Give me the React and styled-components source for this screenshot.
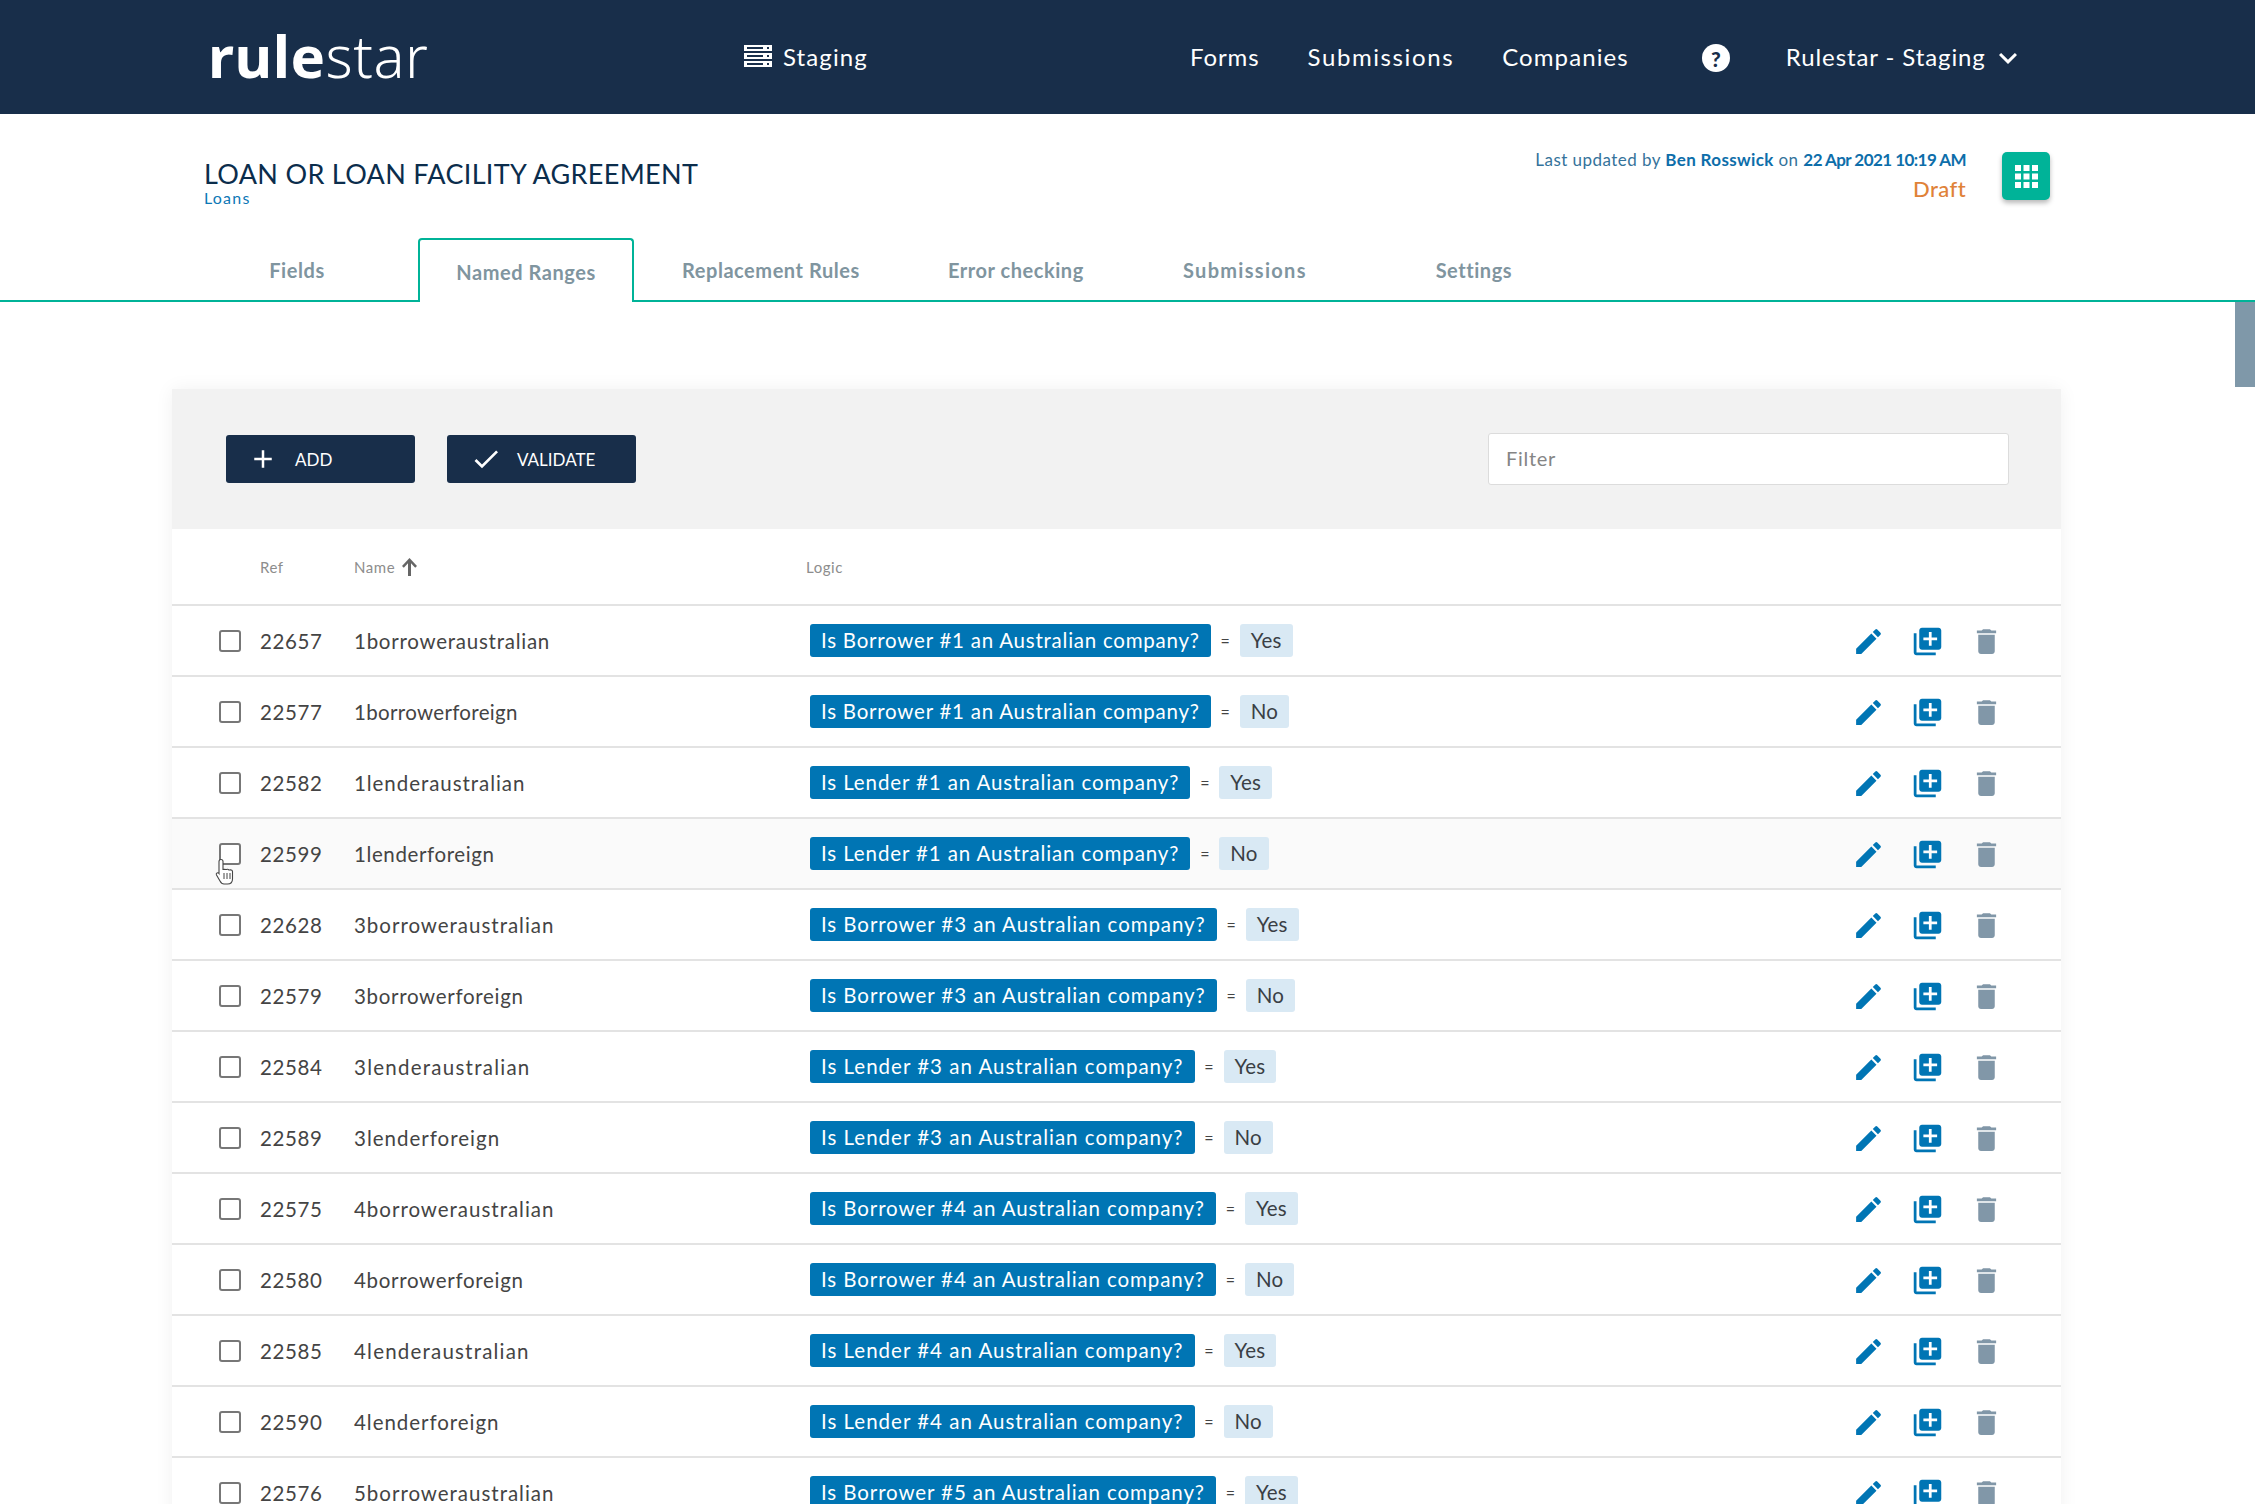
import React from "react";
import styled, { createGlobalStyle } from "styled-components";
import { MdEdit, MdLibraryAdd, MdDelete, MdAdd, MdCheck, MdKeyboardArrowDown } from "react-icons/md";

const Global = createGlobalStyle`
  html, body { margin: 0; padding: 0; height: 1504px; overflow: hidden; background: #fff; }
  body { font-family: "Lato", "Noto Sans", sans-serif; }
  * { box-sizing: border-box; }
`;

const Page = styled.div`position: relative; width: 2255px; height: 1504px; overflow: hidden;`;
const Header = styled.header`
  height: 114px; background: #182e4a; color: #fff; display: flex; align-items: center; padding-left: 208px;
`;
const Logo = styled.div`
  width: 222px; font-size: 58px; line-height: 1; letter-spacing: .5px; margin-top: -3px; white-space: nowrap;
  font-family: "Noto Sans", sans-serif;
  b { font-weight: 700; } span { font-weight: 300; }
`;
const Env = styled.div`
  display: flex; align-items: center; gap: 11px; margin-left: 314px; width: 446px; font-size: 24px; letter-spacing: 1.1px; margin-top: -2px;
`;
const NavGroup = styled.nav`display: flex; align-items: center; gap: 48px; margin-top: -2px;`;
const NavLink = styled.a`font-size: 24px; letter-spacing: ${p => p.$ls}px; color: #fff;`;
const Help = styled.span`
  margin-left: 73px; width: 28px; height: 28px; border-radius: 50%; background: #fff; color: #182e4a;
  display: flex; align-items: center; justify-content: center; font-weight: 900; font-size: 21px; margin-top: 2px;
`;
const Account = styled.div`display: flex; align-items: center; gap: 4px; margin-left: 56px; font-size: 24px; letter-spacing: .9px; margin-top: -2px;`;
const Chevron = styled(MdKeyboardArrowDown)`margin-top: 3px;`;

const TitleBar = styled.div`
  height: 124px; display: flex; padding-left: 204px; padding-right: 205px; align-items: flex-start; justify-content: space-between;
`;
const TitleBlock = styled.div`padding-top: 44px;`;
const Title = styled.h1`margin: 0; font-weight: 400; font-size: 27px; line-height: 32px; letter-spacing: .32px; color: #0b2d4c;`;
const Sub = styled.div`font-size: 16px; line-height: 18px; color: #0d78b6; margin-top: -1px; letter-spacing: 1.2px;`;
const MetaWrap = styled.div`display: flex; gap: 36px; padding-top: 38px;`;
const Meta = styled.div`text-align: right; margin-top: -3px;`;
const Updated = styled.div`font-size: 17px; line-height: 22px; color: #35739b; letter-spacing: .45px;`;
const UpdatedStrong = styled.b`font-weight: 700; color: #0d6eaa; letter-spacing: ${p => p.$ls}px;`;
const Status = styled.div`font-size: 22px; line-height: 26px; margin-top: 5px; color: #e08238; letter-spacing: .4px; font-weight: 500;`;
const GridBtn = styled.button`
  width: 48px; height: 48px; border: 0; border-radius: 5px; background: #00b398; margin-top: 0; padding: 0;
  box-shadow: 0 3px 5px rgba(0,0,0,.28); display: flex; align-items: center; justify-content: center;
`;

const Tabs = styled.div`
  height: 64px; display: flex; gap: 13px; padding-left: 189px; border-bottom: 2px solid #00b398;
`;
const Tab = styled.div`
  min-width: 216px; padding: ${p => (p.$active ? "1px" : "2px")} 35px 0; height: 64px; display: flex; align-items: center; justify-content: center;
  font-size: 20px; font-weight: 700; color: #80959f; letter-spacing: ${p => p.$ls ?? 0.55}px; border-radius: 4px 4px 0 0;
  padding-bottom: ${p => (p.$active ? "0" : "3px")};
  ${p => p.$active && "background:#fff; border:2px solid #00b398; border-bottom:0; color:#80959f;"}
`;

const Card = styled.section`
  margin: 87px 0 0 172px; width: 1889px; background: #fff; box-shadow: 0 0 18px rgba(0,0,0,.06);
`;
const Toolbar = styled.div`
  height: 140px; background: #f2f2f2; display: flex; align-items: center; padding: 0 52px 0 54px; gap: 32px;
`;
const ActionBtn = styled.button`
  width: 189px; height: 48px; border: 0; border-radius: 3px; background: #182e4a; color: #fff; display: flex; align-items: center;
  gap: ${p => p.$gap}px; padding-left: ${p => p.$pad}px; font-family: inherit; font-size: 17px; letter-spacing: 0;
`;
const Filter = styled.div`
  margin-left: auto; width: 521px; height: 52px; background: #fff; border: 1px solid #dcdcdc; border-radius: 3px;
  display: flex; align-items: center; padding: 0 0 2px 17px; color: #858585; font-size: 20px; letter-spacing: .7px;
`;
const Row = styled.div`
  display: grid; grid-template-columns: 88px 94px 452px 1fr auto; align-items: center; height: 71px; border-top: 2px solid #e3e3e3;
  background: ${p => (p.$hover ? "#fafafa" : "#fff")};
`;
const HeadRow = styled(Row)`
  height: 75px; border-top: 0; font-size: 15px; color: #8d8d8d; letter-spacing: .55px;
`;
const NameHead = styled.span`display: flex; align-items: center; gap: 7px;`;
const Check = styled.span`
  display: block; width: 22px; height: 22px; margin-left: 47px; border: 2px solid #777; border-radius: 3px; background: #fff;
`;
const Cell = styled.span`font-size: 20.5px; color: #444; letter-spacing: ${p => p.$ls ?? 0.6}px;`;
const Logic = styled.div`display: flex; align-items: center; margin-left: 4px;`;
const Question = styled.span`
  height: 33px; padding: 0 11px; border-radius: 3px; background: #0075b4; color: #fff; font-size: 20.5px; line-height: 33px; letter-spacing: ${p => p.$ls}px; white-space: nowrap;
`;
const Eq = styled.span`width: 29px; text-align: center; font-size: 16px; color: #444;`;
const Val = styled.span`
  height: 33px; padding: 0 11px; border-radius: 3px; background: #d9e9f4; color: #3a3f45; font-size: 20.5px; line-height: 33px; letter-spacing: .2px;
`;
const Actions = styled.div`display: flex; align-items: center; gap: 26px; padding-right: 58px; padding-top: 1px;`;
const IconSlot = styled.span`display: flex; width: 33px; height: 33px; color: ${p => p.$color};`;

const ScrollThumb = styled.div`position: absolute; right: 0; top: 302px; width: 20px; height: 85px; background: #7f98a9;`;
const Cursor = styled.svg`position: absolute; left: 215px; top: 858px; width: 19px; height: 27px;`;

const Rows = [
  ["22657", "1borroweraustralian", "Is Borrower #1 an Australian company?", "Yes", 0.75, 0.76],
  ["22577", "1borrowerforeign", "Is Borrower #1 an Australian company?", "No", 0.33, 0.76],
  ["22582", "1lenderaustralian", "Is Lender #1 an Australian company?", "Yes", 0.94, 0.88],
  ["22599", "1lenderforeign", "Is Lender #1 an Australian company?", "No", 0.6, 0.88],
  ["22628", "3borroweraustralian", "Is Borrower #3 an Australian company?", "Yes", 0.98, 0.92],
  ["22579", "3borrowerforeign", "Is Borrower #3 an Australian company?", "No", 0.69, 0.92],
  ["22584", "3lenderaustralian", "Is Lender #3 an Australian company?", "Yes", 1.25, 1.0],
  ["22589", "3lenderforeign", "Is Lender #3 an Australian company?", "No", 1.0, 1.0],
  ["22575", "4borroweraustralian", "Is Borrower #4 an Australian company?", "Yes", 0.98, 0.9],
  ["22580", "4borrowerforeign", "Is Borrower #4 an Australian company?", "No", 0.69, 0.9],
  ["22585", "4lenderaustralian", "Is Lender #4 an Australian company?", "Yes", 1.2, 1.0],
  ["22590", "4lenderforeign", "Is Lender #4 an Australian company?", "No", 0.95, 1.0],
  ["22576", "5borroweraustralian", "Is Borrower #5 an Australian company?", "Yes", 0.98, 0.9],
];

const ServerIcon = () => (
  <svg width="28" height="22" viewBox="0 0 28 22" fill="#fff">
    <path fillRule="evenodd" d="M0 0h28v6H0zM3 2v2h16V2zM23 2v2h2V2zM0 8h28v6H0zM3 10v2h16v-2zM23 10v2h2v-2zM0 16h28v6H0zM3 18v2h16v-2zM23 18v2h2v-2z" />
  </svg>
);
const GridIcon = () => (
  <svg width="23" height="23" viewBox="0 0 23 23" fill="#fff">
    {[0, 8.5, 17].map(y => [0, 8.5, 17].map(x => <rect key={`${x}-${y}`} x={x} y={y} width="6" height="6" />))}
  </svg>
);
const SortIcon = () => (
  <svg width="15" height="18" viewBox="0 0 15 18" fill="#666">
    <path d="M7.500 0 15 8l-1.800 1.700-4.200-4.400V18H6V5.300L1.800 9.700 0 8z" />
  </svg>
);

export default function App() {
  return (
    <Page>
      <Global />
      <Header>
        <Logo><b>rule</b><span>star</span></Logo>
        <Env><ServerIcon />Staging</Env>
        <NavGroup>
          <NavLink $ls={0.9}>Forms</NavLink>
          <NavLink $ls={1.6}>Submissions</NavLink>
          <NavLink $ls={1.1}>Companies</NavLink>
        </NavGroup>
        <Help>?</Help>
        <Account>Rulestar - Staging <Chevron size={36} /></Account>
      </Header>
      <TitleBar>
        <TitleBlock>
          <Title>LOAN OR LOAN FACILITY AGREEMENT</Title>
          <Sub>Loans</Sub>
        </TitleBlock>
        <MetaWrap>
          <Meta>
            <Updated>Last updated by <UpdatedStrong $ls={0.35}>Ben Rosswick</UpdatedStrong> on <UpdatedStrong $ls={-0.55}>22 Apr 2021 10:19 AM</UpdatedStrong></Updated>
            <Status>Draft</Status>
          </Meta>
          <GridBtn><GridIcon /></GridBtn>
        </MetaWrap>
      </TitleBar>
      <Tabs>
        <Tab>Fields</Tab>
        <Tab $active>Named Ranges</Tab>
        <Tab>Replacement Rules</Tab>
        <Tab>Error checking</Tab>
        <Tab $ls={1.3}>Submissions</Tab>
        <Tab>Settings</Tab>
      </Tabs>
      <Card>
        <Toolbar>
          <ActionBtn $pad={22} $gap={17}><MdAdd size={30} />ADD</ActionBtn>
          <ActionBtn $pad={23} $gap={15}><MdCheck size={32} />VALIDATE</ActionBtn>
          <Filter>Filter</Filter>
        </Toolbar>
        <HeadRow>
          <span />
          <span>Ref</span>
          <NameHead>Name <SortIcon /></NameHead>
          <span>Logic</span>
          <span />
        </HeadRow>
        {Rows.map(([id, name, q, v, nameLs, qLs], i) => (
          <Row key={id} $hover={i === 3}>
            <Check />
            <Cell>{id}</Cell>
            <Cell $ls={nameLs}>{name}</Cell>
            <Logic>
              <Question $ls={qLs}>{q}</Question>
              <Eq>=</Eq>
              <Val>{v}</Val>
            </Logic>
            <Actions>
              <IconSlot $color="#0075b4"><MdEdit size={33} /></IconSlot>
              <IconSlot $color="#0075b4"><MdLibraryAdd size={33} /></IconSlot>
              <IconSlot $color="#8197a8"><MdDelete size={33} /></IconSlot>
            </Actions>
          </Row>
        ))}
      </Card>
      <ScrollThumb />
      <Cursor viewBox="0 0 19 27">
        <path d="M6 1.5c1 0 2 .8 2 2V12c0-1 3-1 3 0 0-1 3-1 3 .5 0-1 3.500-1 3.500 1V21c0 3-2 5-5 5H9c-2 0-3-1-4-3l-3.500-6c-1-2 1.500-3 2.500-1.500l0 0V3.500c0-1.200 1-2 2-2z" fill="#fff" stroke="#444" strokeWidth="1.100" />
        <path d="M9 15v6M12 15v6M15 15v6" stroke="#444" strokeWidth="1" fill="none" />
      </Cursor>
    </Page>
  );
}
